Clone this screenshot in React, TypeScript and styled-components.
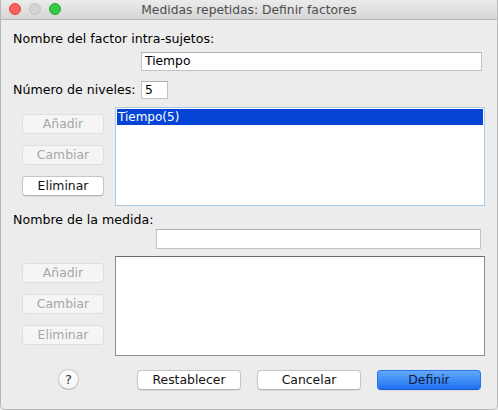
import React from "react";
import styled, { createGlobalStyle } from "styled-components";

const Global = createGlobalStyle`
  html, body { margin: 0; padding: 0; background: #ececec; }
  body { font-family: "DejaVu Sans", "Liberation Sans", sans-serif; font-size: 12.6px; color: #000; }
  * { box-sizing: border-box; }
`;

const Window = styled.div`
  width: 498px;
  height: 410px;
  background: #ececec;
  border: 1px solid #b8b8b8;
  border-top: none;
  border-radius: 0 0 5px 5px;
  display: flex;
  flex-direction: column;
  overflow: hidden;
`;

const TitleBar = styled.div`
  height: 20px;
  flex: none;
  position: relative;
  display: flex;
  align-items: center;
  justify-content: center;
  background: linear-gradient(#ebebeb, #d6d6d6);
  border-bottom: 1px solid #b6b6b6;
  color: #4d4d4d;
  font-size: 12.3px;
`;

const Lights = styled.div`
  position: absolute;
  left: 8px;
  top: 3px;
  display: flex;
  gap: 8px;
`;

const Light = styled.span<{ $c: string; $b: string }>`
  width: 12px;
  height: 12px;
  border-radius: 50%;
  background: ${(p) => p.$c};
  border: 1px solid ${(p) => p.$b};
`;

const Content = styled.div`
  flex: 1;
  display: flex;
  flex-direction: column;
  padding: 0 12px 0 12px;
`;

const Label = styled.div<{ $mt: number }>`
  margin-top: ${(p) => p.$mt}px;
  height: 16px;
  line-height: 16px;
  white-space: nowrap;
`;

const InputRow = styled.div<{ $mt: number; $pl: number }>`
  margin-top: ${(p) => p.$mt}px;
  padding-left: ${(p) => p.$pl}px;
  display: flex;
  align-items: center;
`;

const TextInput = styled.div<{ $w: number; $h: number }>`
  width: ${(p) => p.$w}px;
  height: ${(p) => p.$h}px;
  background: #fff;
  border: 1px solid #c2c2c2;
  border-top-color: #b0b0b0;
  padding: 0 3px;
  line-height: ${(p) => p.$h - 2}px;
  font-size: 12.3px;
`;

const LabelInline = styled.div`
  width: 128px;
  line-height: 16px;
  white-space: nowrap;
`;

const ListSection = styled.div<{ $mt: number }>`
  margin-top: ${(p) => p.$mt}px;
  display: grid;
  grid-template-columns: 102px 370px;
`;

const ButtonCol = styled.div`
  padding: 7px 0 0 9px;
  display: flex;
  flex-direction: column;
  gap: 11px;
`;

const Button = styled.button<{ $w: number; $primary?: boolean }>`
  width: ${(p) => p.$w}px;
  height: 20px;
  padding: 0;
  margin: 0;
  font-family: inherit;
  font-size: 12.4px;
  line-height: 18px;
  border-radius: 4px;
  border: 1px solid ${(p) => (p.$primary ? "#2b73e6" : "#c6c6c6")};
  border-bottom-color: ${(p) => (p.$primary ? "#1b5fd0" : "#b4b4b4")};
  background: ${(p) => (p.$primary ? "linear-gradient(#62a9fd, #1f70f1)" : "#fff")};
  color: ${(p) => (p.$primary ? "#0f1a3c" : "#111")};
  box-shadow: 0 0.5px 1px rgba(0, 0, 0, 0.08);
  &:disabled {
    background: #f5f5f5;
    border-color: #dedede;
    color: #a6a6a6;
    box-shadow: none;
  }
`;

const ListBox = styled.div<{ $h: number; $focused?: boolean }>`
  height: ${(p) => p.$h}px;
  background: #fff;
  border: 1px solid ${(p) => (p.$focused ? "#a9c8e6" : "#8e8e8e")};
  border-top-color: ${(p) => (p.$focused ? "#a9c8e6" : "#6e6e6e")};
  padding: 1px;
`;

const ListItem = styled.div<{ $selected?: boolean }>`
  height: 16px;
  line-height: 16px;
  padding-left: 1px;
  font-size: 12px;
  background: ${(p) => (p.$selected ? "#0644d8" : "transparent")};
  color: ${(p) => (p.$selected ? "#fff" : "#000")};
`;

const Footer = styled.div`
  margin-top: 13px;
  display: flex;
  align-items: center;
  padding-left: 45px;
`;

const Help = styled.button`
  width: 21px;
  height: 21px;
  border-radius: 50%;
  padding: 0;
  border: 1px solid #c4c4c4;
  border-bottom-color: #b0b0b0;
  background: linear-gradient(#ffffff, #f4f4f4);
  font-family: inherit;
  font-size: 13px;
  color: #333;
  margin-right: 58px;
`;

const FooterButtons = styled.div`
  display: flex;
  gap: 16px;
`;

export default function App() {
  return (
    <>
      <Global />
      <Window>
        <TitleBar>
          <Lights>
            <Light $c="#fc605c" $b="#e0443e" />
            <Light $c="#d3d3d3" $b="#c2c2c2" />
            <Light $c="#34c84a" $b="#26a934" />
          </Lights>
          Medidas repetidas: Definir factores
        </TitleBar>
        <Content>
          <Label $mt={11}>Nombre del factor intra-sujetos:</Label>
          <InputRow $mt={5} $pl={128}>
            <TextInput $w={341} $h={19}>Tiempo</TextInput>
          </InputRow>
          <InputRow $mt={10} $pl={0}>
            <LabelInline>Número de niveles:</LabelInline>
            <TextInput $w={27} $h={18}>5</TextInput>
          </InputRow>
          <ListSection $mt={8}>
            <ButtonCol>
              <Button $w={82} disabled>Añadir</Button>
              <Button $w={82} disabled>Cambiar</Button>
              <Button $w={82}>Eliminar</Button>
            </ButtonCol>
            <ListBox $h={99} $focused>
              <ListItem $selected>Tiempo(5)</ListItem>
            </ListBox>
          </ListSection>
          <Label $mt={6}>Nombre de la medida:</Label>
          <InputRow $mt={1} $pl={143}>
            <TextInput $w={325} $h={20} />
          </InputRow>
          <ListSection $mt={7}>
            <ButtonCol>
              <Button $w={82} disabled>Añadir</Button>
              <Button $w={82} disabled>Cambiar</Button>
              <Button $w={82} disabled>Eliminar</Button>
            </ButtonCol>
            <ListBox $h={100} />
          </ListSection>
          <Footer>
            <Help>?</Help>
            <FooterButtons>
              <Button $w={104}>Restablecer</Button>
              <Button $w={104}>Cancelar</Button>
              <Button $w={104} $primary>Definir</Button>
            </FooterButtons>
          </Footer>
        </Content>
      </Window>
    </>
  );
}
